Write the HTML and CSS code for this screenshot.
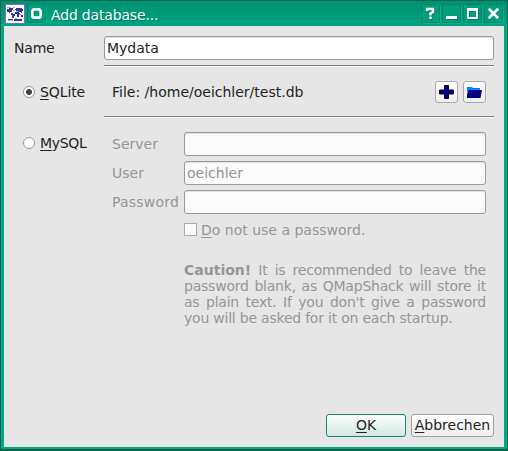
FILE: index.html
```html
<!DOCTYPE html>
<html lang="en">
<head>
<meta charset="utf-8">
<title>Add database...</title>
<link rel="stylesheet" href="styles.css">
</head>
<body>
<div class="window">
  <header class="titlebar">
    <svg class="app-icon" width="20" height="20" viewBox="0 0 20 20">
      <rect width="20" height="20" fill="#7470c8"/><rect x="1" y="1" width="18" height="18" fill="#fff"/>
      <path fill="#35329a" d="M2 5h2V4h4v2H7v2H5v1H4V8H2zM6 9h2v1h2v2H9v2H7v-3H6zM10 5h1V4h6v1h1v2h-1v2h-1V8h-2v1h1v2h-1v2h-2v-3h-2V8h1V6h-1zM16 11h2v2h-2zM3 15h5v1H3zM9 15h8v2H9z"/>
      <path stroke="#aaa7df" d="M2 3.500h4M8 3.500h2M8 6.500h2M11 7.500h2M3 16.500h5M10 14.500h2M14 10.500h2"/>
    </svg>
    <span class="tb pin"><svg width="19" height="19" viewBox="0 0 19 19"><rect x="6" y="6" width="8" height="8" rx="2" fill="none" stroke="#087357" stroke-width="2.400"/><rect x="5.300" y="5.300" width="8.400" height="8.400" rx="2.500" fill="none" stroke="#fff" stroke-width="2.700"/></svg></span>
    <h1 class="title">Add database...</h1>
    <span class="tb"><svg width="19" height="19" viewBox="0 0 19 19"><g fill="none" stroke-width="2.400"><path stroke="#087357" d="M6.500 7.500V6h6v3l-2.500 2v1.500M10 14v2"/><path stroke="#fff" d="M6 7V5h6v3l-2.500 1.500v2M9.500 12.500v2.400"/></g></svg></span>
    <span class="tb"><svg width="19" height="19" viewBox="0 0 19 19"><path fill="#087357" d="M5 13h11v3H5z"/><path fill="#fff" d="M4 12h11v3H4z"/></svg></span>
    <span class="tb"><svg width="19" height="19" viewBox="0 0 19 19"><g fill="none" stroke-width="2"><path stroke="#087357" d="M6 6h9v9H6z"/><path stroke="#fff" d="M5 5h9v9H5z"/><path stroke="#fff" stroke-width="3" d="M4 5.500h11"/></g></svg></span>
    <span class="tb"><svg width="19" height="19" viewBox="0 0 19 19"><g fill="none" stroke-width="2.700"><path stroke="#087357" d="M5.500 5.500l9 9M14.500 5.500l-9 9"/><path stroke="#fff" d="M4.800 4.800l9.400 9.400M14.200 4.800l-9.400 9.400"/></g></svg></span>
  </header>
  <main class="dialog">
    <div class="row name-row">
      <label for="name">Name</label>
      <input id="name" class="field" value="Mydata">
    </div>
    <hr class="rule">
    <div class="row sqlite-row">
      <label class="option"><span class="radio checked"></span><span><u>S</u>QLite</span></label>
      <div class="file">
        <span class="path">File: /home/oeichler/test.db</span>
        <button class="tool"><svg width="23" height="22" viewBox="0 0 23 22"><path d="M9.500 4.500h4v4.500h5v4h-5v4.500h-4V13h-5V9h5z" fill="#000080" stroke="#08082c"/></svg></button>
        <button class="tool"><svg width="23" height="22" viewBox="0 0 23 22"><path d="M4 6h5l1 1h7v4H4z" fill="#0b80ff"/><path d="M6 9h13l-1.500 8H4V13z" fill="#000080"/></svg></button>
      </div>
    </div>
    <hr class="rule">
    <div class="row mysql-row">
      <label class="option"><span class="radio"></span><span class="mysql-name"><u>M</u>ySQL</span></label>
      <div class="server-form">
        <span>Server</span><input class="field" disabled>
        <span>User</span><input class="field" value="oeichler" disabled>
        <span class="wide">Password</span><input class="field" disabled>
        <label class="no-password"><span class="box"></span><span><u>D</u>o not use a password.</span></label>
        <p class="caution"><b>Caution!</b> It is recommended to leave the password blank, as QMapShack will store it as plain text. If you don't give a password you will be asked for it on each startup.</p>
      </div>
    </div>
    <footer class="actions">
      <button class="push ok"><span><u>O</u>K</span></button>
      <button class="push cancel"><span><u>A</u>bbrechen</span></button>
    </footer>
  </main>
</div>
</body>
</html>
```

FILE: styles.css
```css
* { box-sizing: border-box; }
body { margin: 0; font: 14px/16px "DejaVu Sans", sans-serif; color: #222; }
u { text-decoration-thickness: 1px; text-underline-offset: 2px; text-decoration-skip-ink: none; }
button, input { font: inherit; color: inherit; margin: 0; }

.window {
  width: 508px; height: 451px;
  display: flex; flex-direction: column;
  padding: 0 3px 2px;
  border: 1px solid #006650;
  border-bottom-width: 2px;
  background: #00a886;
}
.titlebar {
  height: 25px;
  display: flex; align-items: flex-start; gap: 2px;
  margin: 0 -3px; padding: 3px 4px 0 4px;
  background: linear-gradient(#009072, #00a483);
}
.app-icon { flex: none; }
.tb {
  width: 19px; height: 19px; flex: none;
  border-radius: 2px;
  background: #009e7d;
  box-shadow: inset 0 0 0 1px #008467, 1px 1px 0 #00b491;
}
.tb svg { display: block; }
.title {
  flex: 1; margin: 0 0 0 3px;
  font-size: 14px; font-weight: normal; line-height: 23px; letter-spacing: -.17px;
  color: #f4fffc; text-shadow: 1px 1px 0 #087357;
}
.dialog {
  flex: 1; display: flex; flex-direction: column;
  padding: 10px 10px 10px;
  background: #e6e6e6;
}
.row { display: grid; grid-template-columns: 90px 1fr; }
.name-row { align-items: center; height: 24px; }
.name-row label { letter-spacing: -.2px; }
.field {
  width: 100%; height: 24px; padding: 0 2px;
  border: 1px solid #999; border-radius: 3px;
  background: #fff; box-shadow: inset 0 1px 0 #e2e2e2;
}
.field:disabled { background: #fafafa; color: #959595; }
.rule {
  width: 390px; height: 2px; margin: 5px 0 0 90px;
  border: 0; border-top: 1px solid #857d80; background: #fff;
}
.sqlite-row { height: 44px; align-items: center; padding-top: 6px; }
.option { display: flex; align-items: center; gap: 5px; padding-left: 9px; letter-spacing: -.1px; }
.mysql-name { letter-spacing: -.35px; }
.radio {
  width: 12px; height: 12px; flex: none;
  border: 1px solid #999; border-radius: 50%; background: #fff;
}
.checked { background: radial-gradient(circle, #444 0 2.6px, #fff 3.4px); }
.file { display: flex; align-items: center; padding: 0 8px; gap: 5px; }
.path { flex: 1; }
.tool {
  width: 23px; height: 22px; padding: 0;
  border: 1px solid #aaa; border-radius: 3px;
  background: linear-gradient(#fff, #eee);
}
.tool svg { display: block; margin: -1px; }
.mysql-row { align-items: start; }
.mysql-row .option { padding-top: 17px; }
.server-form {
  display: grid; grid-template-columns: 67px 302px;
  column-gap: 5px; row-gap: 5px; align-items: center;
  padding: 14px 8px 0; color: #959595;
}
.wide { letter-spacing: .2px; }
.no-password { grid-column: 2; display: flex; align-items: center; gap: 4px; height: 21px; }
.box { width: 13px; height: 13px; border: 1px solid #aaa; background: #fafafa; }
.caution { grid-column: 2; margin: 17px 0 0; text-align: justify; letter-spacing: -.22px; }
.caution b { letter-spacing: 0; }
.actions { display: flex; justify-content: flex-end; gap: 5px; margin-top: auto; }
.push {
  height: 23px; padding: 0;
  border: 1px solid #a0a0a0; border-radius: 3px;
  background: linear-gradient(#fff, #eee);
  line-height: 21px; white-space: nowrap;
}
.ok { width: 80px; border-color: #16866d; background: linear-gradient(#fafffd, #d5e6e2); }
.cancel { width: 83px; }
```
